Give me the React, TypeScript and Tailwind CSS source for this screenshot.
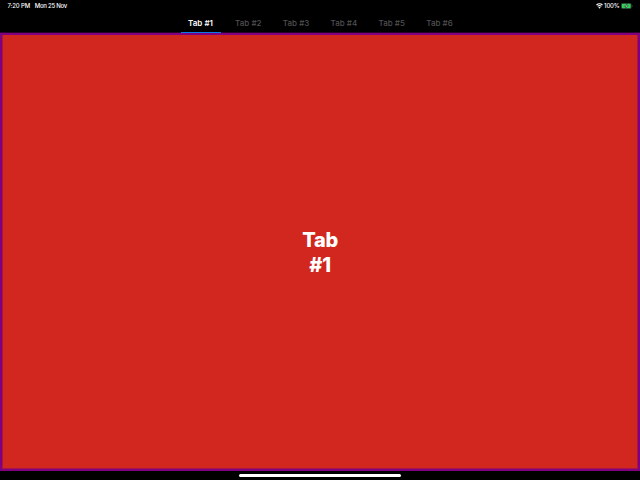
const tabs = ["Tab #1", "Tab #2", "Tab #3", "Tab #4", "Tab #5", "Tab #6"];

function StatusBar() {
  return (
    <div className="flex h-[11px] items-center justify-between pl-[7.5px] pr-[7px] text-[6px] font-medium leading-[11px]">
      <div className="flex gap-[4.5px] tracking-[-0.13px]">
        <span>7:20 PM</span>
        <span className="tracking-[-0.24px]">Mon 25 Nov</span>
      </div>
      <div className="flex items-center gap-[1.5px]">
        <svg width="7" height="6" viewBox="0 0 14 12" fill="none" stroke="white" strokeWidth="2.2">
          <path d="M1 4a8.7 8.7 0 0 1 12 0M3.3 6.7a5.5 5.5 0 0 1 7.4 0" />
          <path d="M4.7 8.7a3.2 3.2 0 0 1 4.6 0L7 11.4Z" fill="white" stroke="none" />
        </svg>
        <span className="tracking-[-0.2px]">100%</span>
        <svg width="12" height="6" viewBox="0 0 24 12">
          <rect x=".5" y=".5" width="20" height="11" rx="3" fill="none" stroke="#58705e" />
          <rect x="1.5" y="1.5" width="18" height="9" rx="2" fill="#32d15b" />
          <path d="M12 1.5 7 6.7h3.3L9 10.5l5.3-5.3H11Z" fill="white" stroke="black" strokeWidth=".9" />
          <path d="M22 4v4q2-2 0-4" fill="#777" />
        </svg>
      </div>
    </div>
  );
}

export default function App() {
  return (
    <div className="flex h-[480px] w-[640px] flex-col overflow-hidden bg-black font-['Inter','Liberation_Sans',sans-serif] text-white">
      <StatusBar />
      <nav className="flex h-[22px] justify-center gap-[7.8px] bg-linear-to-t from-[#2b002b] from-[1px] to-black to-[1px]">
        {tabs.map((tab, i) => (
          <button
            key={tab}
            className={`h-[22px] w-[40px] whitespace-nowrap border-b pt-[3px] text-[8px] leading-[18px] tracking-[0.02px] ${i === 0 ? "border-[#0a7ae6] font-semibold text-white" : "border-transparent font-medium text-[#505053]"}`}
          >
            {tab}
          </button>
        ))}
      </nav>
      <main className="flex h-[438px] items-center justify-center border-2 border-[#800080] bg-[#d1271f] shadow-[inset_1px_0_#a5154c,inset_-1px_0_#a5154c,inset_0_-1px_#a5154c]">
        <h1 className="w-[50px] pt-[2px] text-center text-[20px] font-extrabold leading-[25px] tracking-[-0.3px]">Tab #1</h1>
      </main>
      <div className="flex h-[9px] items-center justify-center">
        <div className="h-[3px] w-[162px] rounded-full bg-white" />
      </div>
    </div>
  );
}
